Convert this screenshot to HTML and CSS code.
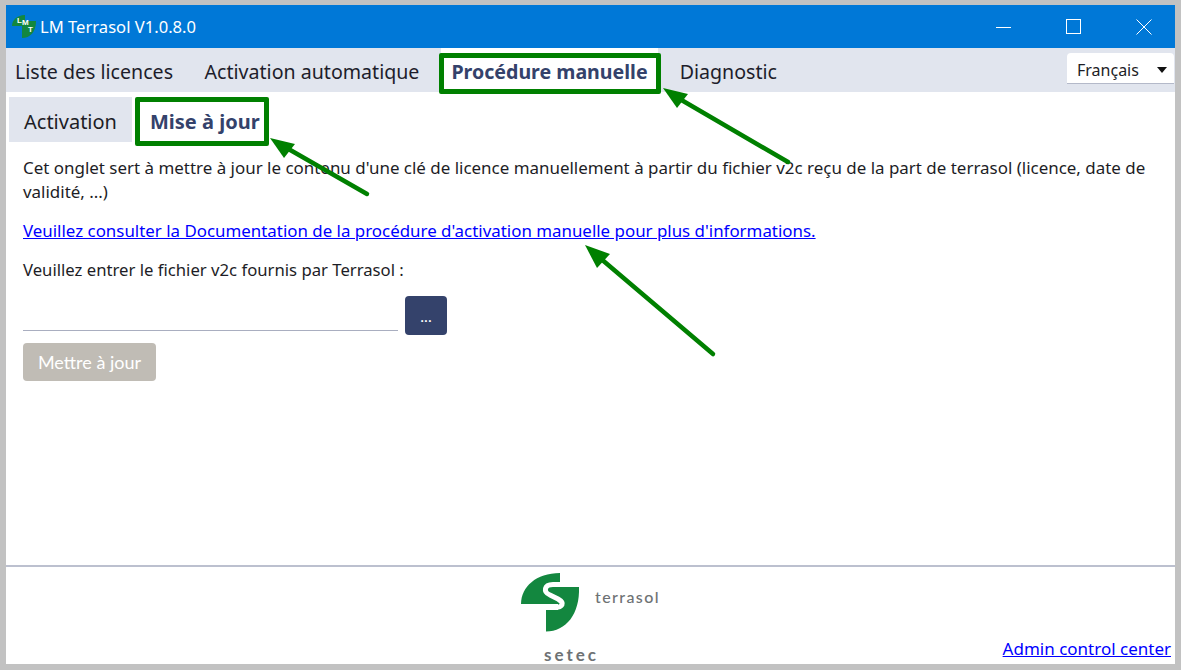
FILE: index.html
```html
<!DOCTYPE html>
<html lang="fr">
<head>
<meta charset="utf-8">
<title>LM Terrasol V1.0.8.0</title>
<link rel="stylesheet" href="styles.css">
</head>
<body>
<div class="window">
  <header class="titlebar">
    <svg class="app-icon" width="24" height="24" viewBox="0 0 24 24">
      <path d="M0 11C0 5 5 0 13 0V10L10 11Z" fill="#13873f"/>
      <path d="M10 23C18 23 24 17 24 6H10Z" fill="#13873f"/>
      <text x="5" y="8" class="icon-letter">L</text>
      <text x="10" y="10" class="icon-letter">M</text>
      <text x="16" y="17" class="icon-letter">T</text>
    </svg>
    <span class="app-title">LM Terrasol V1.0.8.0</span>
    <div class="win-controls">
      <svg class="win-btn" width="16" height="16" viewBox="0 0 16 16"><path d="M0 8.500H15" stroke="#fff" fill="none"/></svg>
      <svg class="win-btn" width="16" height="16" viewBox="0 0 16 16"><rect x=".500" y=".500" width="14" height="14" stroke="#fff" fill="none"/></svg>
      <svg class="win-btn" width="16" height="16" viewBox="0 0 16 16"><path d="M.500 .500L15.500 15.500M15.500 .500L.500 15.500" stroke="#fff" fill="none"/></svg>
    </div>
  </header>

  <nav class="main-tabs">
    <span class="main-tab">Liste des licences</span>
    <span class="main-tab">Activation automatique</span>
    <span class="main-tab main-tab-active">Procédure manuelle</span>
    <span class="main-tab">Diagnostic</span>
    <div class="lang-select"><span>Français</span><i class="caret"></i></div>
  </nav>

  <main class="content">
    <div class="sub-tabs">
      <span class="sub-tab">Activation</span>
      <span class="sub-tab sub-tab-active">Mise à jour</span>
    </div>
    <div class="panel">
      <p class="intro">Cet onglet sert à mettre à jour le contenu d'une clé de licence manuellement à partir du fichier v2c reçu de la part de terrasol (licence, date de validité, ...)</p>
      <p class="doc-line"><a class="link" href="#">Veuillez consulter la Documentation de la procédure d'activation manuelle pour plus d'informations.</a></p>
      <p class="file-label">Veuillez entrer le fichier v2c fournis par Terrasol :</p>
      <div class="file-row">
        <div class="file-input"></div>
        <button class="browse-btn">...</button>
      </div>
      <button class="update-btn">Mettre à jour</button>
    </div>
  </main>

  <footer class="footer">
    <div class="logo">
      <svg width="60" height="60" viewBox="0 0 60 60">
        <path d="M1 32C1 15 16 1 40 1V32Z" fill="#13873f"/>
        <path d="M26 59.500C46 59.500 60 42 59 15H38V38H26Z" fill="#13873f"/>
        <path d="M40 12.500H33C24 12.500 23 20 30 23L38 27C45 31 43 35.500 34 35.500H24" fill="none" stroke="#fff" stroke-width="5"/>
      </svg>
      <span class="logo-terrasol">terrasol</span>
      <span class="logo-setec">setec</span>
    </div>
    <a class="link admin-link" href="#">Admin control center</a>
  </footer>
</div>

<span class="mark mark-main"></span>
<span class="mark mark-sub"></span>
<svg class="arrows" width="1181" height="670" viewBox="0 0 1181 670">
  <g stroke="#008000" stroke-width="4.500" fill="#008000" stroke-linecap="round">
    <path d="M788 162L678 98" fill="none"/>
    <path d="M663 88L688 94L677 108Z" stroke="none"/>
    <path d="M367 194L285 147" fill="none"/>
    <path d="M270 138L295 144L284 158Z" stroke="none"/>
    <path d="M713 354L600 258" fill="none"/>
    <path d="M585 245L610 254L597 268Z" stroke="none"/>
  </g>
</svg>
</body>
</html>
```
FILE: styles.css
```css
* { box-sizing: border-box; }
html, body { margin: 0; height: 100%; }
body { width: 1181px; height: 670px; overflow: hidden; background: #fff; font-family: "Noto Sans", sans-serif; color: #1d1d26; }

.window { width: 1181px; height: 670px; border: solid #c2c2c2; border-width: 5px 6px 6px; display: flex; flex-direction: column; background: #fff; }

.titlebar { height: 43px; background: #0078d7; display: flex; align-items: center; padding-left: 6px; color: #fff; flex: none; }
.app-icon { flex: none; }
.icon-letter { font: 700 8px "Liberation Sans", sans-serif; fill: #fff; }
.app-title { margin-left: 4px; font: 16.600px "Noto Sans", sans-serif; }
.win-controls { margin-left: auto; display: flex; align-items: center; gap: 54px; padding-right: 23px; }
.win-btn { display: block; }

.main-tabs { height: 44px; background: #e1e5ee; display: flex; align-items: stretch; flex: none; }
.main-tab { font: 19.600px "Noto Sans", sans-serif; line-height: 47px; padding: 0 10px; margin-right: 12px; color: #1d1d2b; white-space: nowrap; }
.main-tab:first-child { padding-left: 9px; margin-right: 11.500px; }
.main-tab-active { background: #fff; color: #34426b; font-weight: 700; }
.lang-select { margin: 5px 1px 8px auto; width: 107px; background: #fff; border-bottom: 1px solid #b4b9c9; border-radius: 4px 4px 0 0; display: flex; align-items: center; padding: 3px 7px 0 10px; font: 16px "Noto Sans", sans-serif; justify-content: space-between; }
.caret { width: 0; height: 0; border: 5px solid transparent; border-top: 6px solid #111; border-bottom: 0; }

.content { flex: 1; display: flex; flex-direction: column; min-height: 0; }
.sub-tabs { display: flex; gap: 3px; padding: 5px 0 0 3px; height: 50px; flex: none; }
.sub-tab { font: 20px "Noto Sans", sans-serif; line-height: 49px; padding: 0 15px; background: #e1e5ee; white-space: nowrap; }
.sub-tab-active { background: #fff; color: #34426b; font-weight: 700; }
.panel { padding: 0 17px; }
.intro { margin: 14px 0 0; font-size: 16.950px; line-height: 24px; }
.doc-line { margin: 15px 0 0; font-size: 16.900px; line-height: 24px; }
.link { color: #0000ff; text-decoration: underline; }
.file-label { margin: 15px 0 0; font-size: 16.700px; line-height: 24px; }
.file-row { display: flex; align-items: flex-end; gap: 7px; margin-top: 14px; }
.file-input { width: 375px; height: 1px; background: #a9aec0; margin-bottom: 4px; }
.browse-btn { width: 42px; height: 39px; border: 0; border-radius: 4px; background: #34426b; color: #fff; font: 16px "Lato", sans-serif; padding: 0; }
.update-btn { display: block; margin-top: 8px; width: 133px; height: 38px; border: 0; border-radius: 4px; background: #c0bcb5; color: #fff; font: 18px "Lato", sans-serif; padding: 0; }

.footer { height: 99px; flex: none; border-top: 2px solid #bcc0cf; position: relative; display: flex; justify-content: flex-end; align-items: flex-end; padding: 0 4px 4px 0; }
.logo { position: absolute; left: 514px; top: 0; width: 150px; height: 97px; }
.logo svg { position: absolute; left: 0; top: 5px; }
.logo-terrasol { position: absolute; left: 75px; top: 20px; font: 500 16px "Lato", sans-serif; letter-spacing: 1.400px; color: #6e7274; }
.logo-setec { position: absolute; left: 24px; top: 77px; font: 700 17px "Lato", sans-serif; letter-spacing: 3px; color: #6e7274; }
.admin-link { font: 17px "Noto Sans", sans-serif; }

.mark { position: absolute; border: 5px solid #008000; border-radius: 2px; }
.mark-main { left: 439px; top: 53px; width: 222px; height: 41px; }
.mark-sub { left: 135px; top: 97px; width: 134px; height: 49px; }
.arrows { position: absolute; left: 0; top: 0; pointer-events: none; }
```
